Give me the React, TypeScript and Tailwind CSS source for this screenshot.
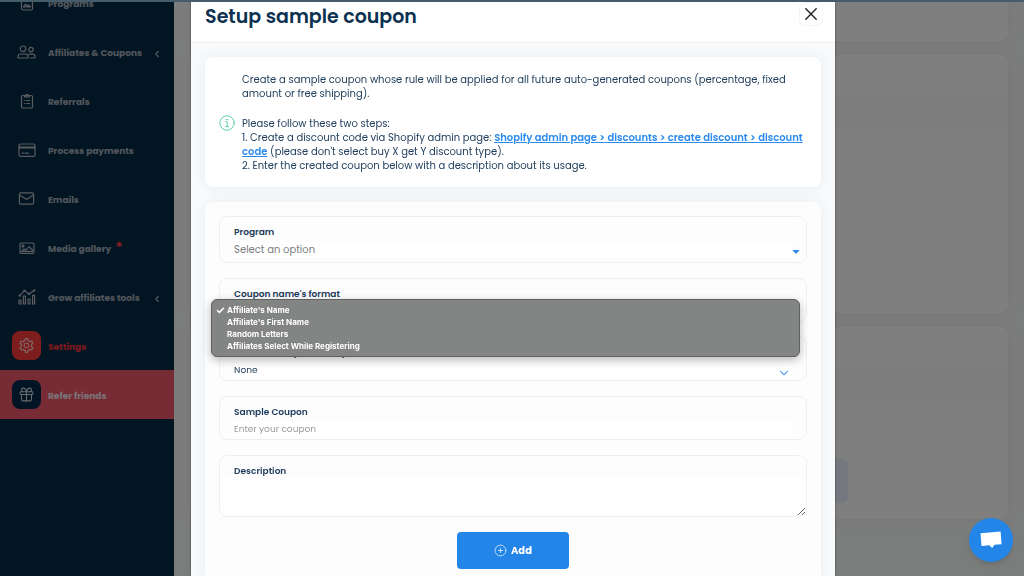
import React, { useState } from 'react';
import { ChevronDown, ChevronLeft, CirclePlus, Gift, Mail, Check } from 'lucide-react';
import { AiOutlineSetting } from 'react-icons/ai';

interface NavItem {
  label: string;
  icon: React.ReactNode;
  expandable?: boolean;
  isNew?: boolean;
  look?: 'settings' | 'refer';
}

const stroke = {
  fill: 'none',
  stroke: 'currentColor',
  strokeLinecap: 'round' as const,
  strokeLinejoin: 'round' as const,
};

function ProgramsIcon() {
  return (
    <svg width="14" height="16" viewBox="0 0 14 16" strokeWidth="1.2" {...stroke}>
      <rect x="1.5" y="1" width="11" height="14" rx="1.5" />
      <path d="M3.5 11.8l2-2.6 1.8 1.6 1.2-.8 2 1.8z" />
    </svg>
  );
}

function AffiliatesIcon() {
  return (
    <svg width="19" height="14" viewBox="0 0 19 14" strokeWidth="1.2" {...stroke}>
      <circle cx="6" cy="3.8" r="2.8" />
      <circle cx="14" cy="4.6" r="2.2" />
      <path d="M1 13v-1.4a2.6 2.6 0 0 1 2.6-2.6h4.8A2.6 2.6 0 0 1 11 11.6V13z" />
      <path d="M11.6 9.2h4a2.4 2.4 0 0 1 2.4 2.4V13h-4.6" />
    </svg>
  );
}

function ReferralsIcon() {
  return (
    <svg width="14" height="16" viewBox="0 0 14 16" strokeWidth="1.2" {...stroke}>
      <rect x="1.5" y="2.5" width="11" height="12.5" rx="1.3" />
      <path d="M4.5 2.5v1.4h5V2.5M6 2.3a1 1 0 0 1 2 0" />
      <path d="M4.3 7.5h.4M6.6 7.5h3M4.3 10.5h.4M6.6 10.5h3" />
    </svg>
  );
}

function PaymentsIcon() {
  return (
    <svg width="18" height="14" viewBox="0 0 18 14" strokeWidth="1.2" {...stroke}>
      <rect x="1" y="1" width="16" height="12.4" rx="1.5" />
      <path d="M1 4h16M1 5h16M4 10.2h1.4M7 10.2h3.4" />
    </svg>
  );
}

function GalleryIcon() {
  return (
    <svg width="16" height="12" viewBox="0 0 16 12" strokeWidth="1.2" {...stroke}>
      <rect x="1" y="1" width="14" height="10.4" rx="1.2" />
      <circle cx="4" cy="3.9" r="1" />
      <path d="M2.6 9.4l2.2-2.6 2 1.4L10 4.6l3.6 3.4v1.4z" />
    </svg>
  );
}

function GrowIcon() {
  return (
    <svg width="18" height="16" viewBox="0 0 18 16" strokeWidth="1.2" {...stroke}>
      <path d="M1.6 6.6l4.8-4.8L11 5l5.4-3.8" />
      <circle cx="1.6" cy="6.6" r=".6" />
      <circle cx="6.4" cy="1.8" r=".6" />
      <circle cx="11" cy="5" r=".6" />
      <circle cx="16.2" cy="1.4" r=".6" />
      <path d="M1 11h2v4H1zM5.4 7h2v8h-2zM10 10h2v5h-2zM14.6 6.4h2V15h-2z" />
    </svg>
  );
}

const navItems: NavItem[] = [
  { label: 'Programs', icon: <ProgramsIcon /> },
  { label: 'Affiliates & Coupons', icon: <AffiliatesIcon />, expandable: true },
  { label: 'Referrals', icon: <ReferralsIcon /> },
  { label: 'Process payments', icon: <PaymentsIcon /> },
  { label: 'Emails', icon: <Mail size={17} strokeWidth={1.7} /> },
  { label: 'Media gallery', icon: <GalleryIcon />, isNew: true },
  { label: 'Grow affiliates tools', icon: <GrowIcon />, expandable: true },
  { label: 'Settings', icon: <AiOutlineSetting size={17} />, look: 'settings' },
  { label: 'Refer friends', icon: <Gift size={17} strokeWidth={1.5} />, look: 'refer' },
];

const rowLook = {
  plain: 'text-[#a4acb8]',
  settings: 'text-[#f8323c]',
  refer: 'bg-[#ee566a] text-[#f4e4ea]',
};

const iconLook = {
  plain: 'text-[#b4b8be]',
  settings: 'bg-[#fa3a3c] text-[#ffd0d0]',
  refer: 'bg-[#042b48] text-[#d0d6dc]',
};

function Sidebar() {
  return (
    <nav className="w-[174px] shrink-0 bg-[#042a46] overflow-hidden">
      <ul className="-mt-6">
        {navItems.map((item) => (
          <li key={item.label}>
            <a
              href="#"
              className={`flex h-[49px] items-center px-3 text-[9px] font-bold ${rowLook[item.look ?? 'plain']}`}
            >
              <span
                className={`flex size-[29px] shrink-0 items-center justify-center rounded-lg ${iconLook[item.look ?? 'plain']}`}
              >
                {item.icon}
              </span>
              <span className="ml-[7px] flex flex-1 whitespace-nowrap pt-[5px]">
                {item.label}
                {item.isNew && <span className="-mt-1 ml-1 text-sm leading-4 text-[#ff3b4a]">*</span>}
              </span>
              {item.expandable && <ChevronLeft size={10} strokeWidth={3} className="mt-1 shrink-0" />}
            </a>
          </li>
        ))}
      </ul>
    </nav>
  );
}

// Settings page behind the dialog
function SettingsPage() {
  return (
    <main className="flex flex-1 flex-col gap-[14px] overflow-hidden bg-[#f7f8f8] px-4">
      <section className="h-[39px] shrink-0 rounded-b-lg bg-white shadow-[0_0_14px_rgba(30,80,70,0.06)]" />
      <section className="h-[258px] shrink-0 overflow-hidden rounded-lg bg-white shadow-[0_0_14px_rgba(30,80,70,0.06)]">
        <div className="h-[42px] bg-white" />
        <div className="h-8 bg-[#f9f9f9]" />
      </section>
      <section className="h-48 shrink-0 overflow-hidden rounded-lg bg-white shadow-[0_0_14px_rgba(30,80,70,0.06)]">
        <div className="h-[42px] bg-white" />
        <div className="h-8 bg-[#fafafa]" />
        <div className="flex justify-end pr-40 pt-[58px]">
          <button type="button" aria-label="Save" className="h-11 w-28 rounded-md bg-[#eaf0fc]" />
        </div>
      </section>
    </main>
  );
}

function InfoCard() {
  return (
    <section className="flex items-center gap-[7px] rounded-lg bg-white pb-[14px] pl-[14px] pr-3 pt-4 text-[10px] leading-[14px] text-[#23415e] shadow-[0_0_14px_rgba(30,80,110,0.07)]">
      <svg width="16" height="16" viewBox="0 0 16 16" className="shrink-0 text-[#5cd0a8]" strokeWidth="1" {...stroke}>
        <circle cx="8" cy="8" r="7.2" />
        <path d="M6.8 6.8H8.2V11.4M6.6 11.6h3" />
        <circle cx="8" cy="4.5" r=".5" fill="currentColor" />
      </svg>
      <div className="flex-1">
        <p className="mb-4">
          Create a sample coupon whose rule will be applied for all future auto-generated coupons (percentage, fixed
          amount or free shipping).
        </p>
        <p>Please follow these two steps:</p>
        <p>
          1. Create a discount code via Shopify admin page:{' '}
          <a href="#" className="font-semibold text-[#2a8aee] underline">
            Shopify admin page &gt; discounts &gt; create discount &gt; discount code
          </a>{' '}
          (please don't select buy X get Y discount type).
        </p>
        <p>2. Enter the created coupon below with a description about its usage.</p>
      </div>
    </section>
  );
}

const formats = ["Affiliate's Name", "Affiliate's First Name", 'Random Letters', 'Affiliates Select While Registering'];

const fieldBox = 'relative rounded-lg border border-[#eeeff0] bg-[#fdfdfd] px-[14px]';
const fieldLabel = 'block text-[9px] font-semibold leading-[14px] text-[#1b3a5a]';

function CouponForm() {
  const [format, setFormat] = useState(formats[0]);

  return (
    <form
      onSubmit={(e) => e.preventDefault()}
      className="flex flex-1 flex-col gap-[15px] rounded-t-lg bg-[#fdfdfd] p-[14px] shadow-[0_0_14px_rgba(30,80,110,0.07)]"
    >
      <div className={`${fieldBox} h-[47px] pt-2`}>
        <label htmlFor="program" className={fieldLabel}>Program</label>
        <select
          id="program"
          className="mt-[3px] block h-4 w-full appearance-none bg-white text-[10px] leading-4 text-[#7b7d80] outline-none"
        >
          <option>Select an option</option>
        </select>
        <svg width="8" height="4" viewBox="0 0 8 4" className="pointer-events-none absolute bottom-2 right-[6px]">
          <path d="M.4 0h7.2L4 4z" fill="#2a86ea" />
        </svg>
      </div>

      <div className={`${fieldBox} h-11 pt-2`}>
        <label htmlFor="format" className={fieldLabel}>Coupon name's format</label>
        <select
          id="format"
          value={format}
          onChange={(e) => setFormat(e.target.value)}
          className="mt-[2px] block h-4 w-full appearance-none bg-white text-[9px] leading-4 text-[#23415e] outline-none"
        >
          {formats.map((name) => (
            <option key={name}>{name}</option>
          ))}
        </select>
        <ul className="absolute -left-[9px] right-[6px] top-5 z-10 rounded-md border border-[#5f6160] bg-[#838584] py-1 font-['Inter',sans-serif] shadow-[0_3px_10px_rgba(0,0,0,0.28)]">
          {formats.map((name) => (
            <li key={name}>
              <button
                type="button"
                onClick={() => setFormat(name)}
                className="flex w-full items-center gap-[3px] pl-1 text-left text-[8px] font-bold leading-3 text-white"
              >
                <span className="w-2">{name === format && <Check size={9} strokeWidth={4} />}</span>
                {name}
              </button>
            </li>
          ))}
        </ul>
      </div>

      <div className={`${fieldBox} h-11 pt-2`}>
        <label htmlFor="default" className={fieldLabel}>Discount coupon description</label>
        <select
          id="default"
          className="mt-[2px] block h-4 w-full appearance-none bg-white text-[9px] leading-4 text-[#23415e] outline-none"
        >
          <option>None</option>
        </select>
        <ChevronDown size={14} className="pointer-events-none absolute bottom-0 right-[15px] text-[#5aa6f2]" />
      </div>

      <div className={`${fieldBox} h-11 pt-2`}>
        <label htmlFor="coupon" className={fieldLabel}>Sample Coupon</label>
        <input
          id="coupon"
          type="text"
          placeholder="Enter your coupon"
          className="mt-[2px] block h-4 w-full bg-white text-[9px] leading-4 outline-none placeholder:text-[#999b9d]"
        />
      </div>

      <div className="relative rounded-lg border border-[#eeeff0] bg-[#fdfdfd] pt-2">
        <label htmlFor="description" className={`${fieldLabel} px-[14px]`}>Description</label>
        <textarea
          id="description"
          className="block h-[38px] w-full resize-y rounded-b-lg bg-white px-[14px] text-[9px] outline-none"
        />
      </div>

      <button
        type="submit"
        className="flex h-[37px] w-28 shrink-0 items-center justify-center gap-1 self-center rounded bg-[#2385e8] text-[10px] font-bold text-white"
      >
        <CirclePlus size={13} strokeWidth={1.6} className="text-[#cfe5fc]" />
        Add
      </button>
    </form>
  );
}

function CouponDialog() {
  return (
    <div className="fixed inset-0 flex justify-center bg-black/50 pl-[2px] pt-[2px]">
      <div
        role="dialog"
        aria-labelledby="dialog-title"
        className="flex w-[63%] flex-col overflow-hidden bg-[#f8fafb] shadow-[0_0_2px_rgba(0,0,0,0.5)]"
      >
        <header className="flex h-[41px] shrink-0 items-start justify-between border-b border-[#eceeef] bg-white pl-[14px] pr-3">
          <h1 id="dialog-title" className="pt-[3px] text-[19px] font-semibold leading-6 text-[#0c3150]">
            Setup sample coupon
          </h1>
          <button
            type="button"
            aria-label="Close"
            className="flex size-6 items-center justify-center rounded-md border border-[#f3f4f5] bg-white text-[#222]"
          >
            <svg width="12" height="12" viewBox="0 0 12 12" strokeWidth="1.4" {...stroke}>
              <path d="M.8.8l10.4 10.4M11.2.8L.8 11.2" />
            </svg>
          </button>
        </header>
        <div className="flex flex-1 flex-col gap-[15px] px-[14px] pt-[14px]">
          <InfoCard />
          <CouponForm />
        </div>
      </div>
    </div>
  );
}

export default function App() {
  return (
    <div className="flex h-screen flex-col overflow-hidden font-['Poppins','Inter',sans-serif]">
      <div className="relative z-20 h-[2px] shrink-0 bg-[#455d6a]" />
      <div className="flex min-h-0 flex-1">
        <Sidebar />
        <SettingsPage />
      </div>
      <CouponDialog />
      <button
        type="button"
        aria-label="Open chat"
        className="fixed bottom-[14px] right-[11px] z-20 flex size-11 items-center justify-center rounded-full bg-[#2385e8] shadow-md"
      >
        <svg width="24" height="20" viewBox="0 0 24 20" fill="#fff">
          <path d="M1.5 3.2L21.6 1.6 22.6 14.2 15.4 14.8 13.2 18 10.4 15.3 2.5 15.9z" />
        </svg>
      </button>
    </div>
  );
}
